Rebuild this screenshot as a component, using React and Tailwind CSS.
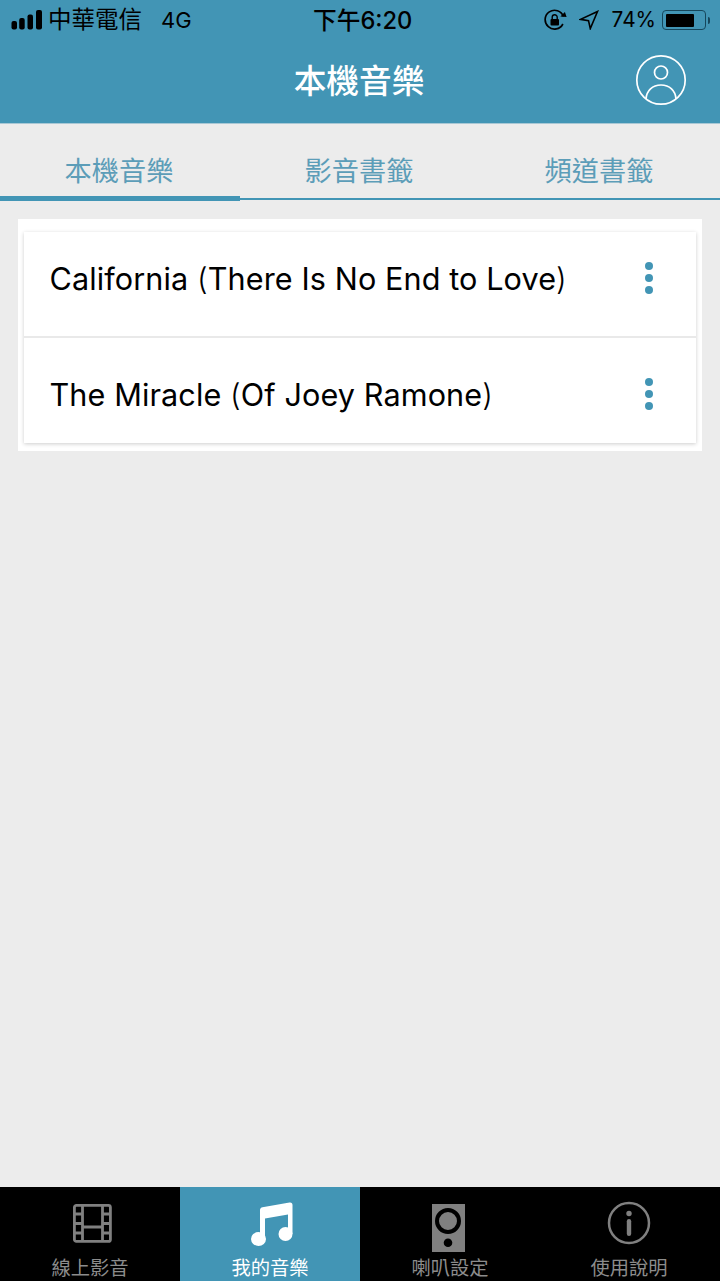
const CJK = "font-['Inter','Noto_Sans_CJK_TC',sans-serif]";

function Signal() {
  return (
    <svg width="32" height="20" viewBox="0 0 32 20" className="shrink-0">
      <rect x="0.500" y="11" width="5.500" height="8.500" rx="2" fill="#000" />
      <rect x="8.200" y="8" width="5.500" height="11.500" rx="2" fill="#000" />
      <rect x="16.500" y="4.500" width="5.500" height="15" rx="2" fill="#000" />
      <rect x="25" y="0" width="6" height="19.500" rx="2" fill="#000" />
    </svg>
  );
}

function RotationLock() {
  return (
    <svg width="23" height="22" viewBox="0 0 23 22" fill="none">
      <path d="M18.900 15A9.400 9.400 0 1 1 19.400 7.500" stroke="#000" strokeWidth="1.700" />
      <path d="M16.400 7.400l6.200.6-1.700-5z" fill="#000" />
      <rect x="6.500" y="10" width="8.500" height="6.500" rx="1" fill="#000" />
      <path d="M8.200 10.500V8.300a2.500 2.500 0 0 1 5 0v2.200" stroke="#000" strokeWidth="1.400" />
    </svg>
  );
}

function LocationArrow() {
  return (
    <svg width="20" height="20" viewBox="0 0 20 20" fill="none">
      <path d="M18.500 1.500 1.600 9.400l7.900 1.200 1.800 8z" stroke="#000" strokeWidth="1.600" strokeLinejoin="miter" />
    </svg>
  );
}

function Battery() {
  return (
    <div className="flex items-center">
      <div className="w-[44px] h-[20px] rounded-[4px] border border-[#16475c] p-[2.500px] pl-[3px] flex">
        <div className="w-[28px] h-full bg-black rounded-[1px]" />
      </div>
      <div className="w-[2px] h-[7px] ml-[1.500px] bg-[#16475c] rounded-r-[2px]" />
    </div>
  );
}

function StatusBar() {
  return (
    <div className={`relative h-[40px] flex items-center justify-between pl-[11px] pr-[10.500px] text-black ${CJK}`}>
      <div className="flex items-center">
        <Signal />
        <span className="ml-[5px] text-[23.500px] leading-none">中華電信</span>
        <span className="ml-[19px] text-[22px] leading-none">4G</span>
      </div>
      <div className="absolute left-[313px] top-[7px] text-[23.700px] font-medium leading-[27px] whitespace-nowrap">下午6:20</div>
      <div className="flex items-center">
        <RotationLock />
        <span className="ml-[12px] flex"><LocationArrow /></span>
        <span className="ml-[13px] text-[20.800px] leading-none">74%</span>
        <span className="ml-[6px] flex"><Battery /></span>
      </div>
    </div>
  );
}

function UserIcon() {
  return (
    <svg width="52" height="52" viewBox="0 0 52 52" fill="none" stroke="#fff" strokeWidth="1.700">
      <circle cx="26" cy="26" r="24.200" />
      <circle cx="26" cy="18.500" r="6.500" />
      <path d="M11 45C11.500 36.500 17.500 31 26 31S40.500 36.500 41 45" />
    </svg>
  );
}

function Header() {
  return (
    <div className="h-[124px] bg-[#4295b5] border-b border-[#a9c8d5]">
      <StatusBar />
      <div className="relative h-[83px] flex items-center justify-center pr-[2px]">
        <span className={`text-[32.700px] font-medium text-white leading-none ${CJK}`}>本機音樂</span>
        <div className="absolute right-[33px] top-[14px]"><UserIcon /></div>
      </div>
    </div>
  );
}

function Tabs() {
  const tabs = ["本機音樂", "影音書籤", "頻道書籤"];
  return (
    <div className="h-[78px] flex">
      {tabs.map((t, i) => (
        <div key={t} className="w-[240px] flex flex-col">
          <div className={`h-[72px] pt-[30px] pr-[2px] text-center text-[27.200px] leading-[36px] text-[#5c9db8] ${CJK}`}>{t}</div>
          {i === 0 ? (
            <div className="h-[5px] bg-[#4295b5]" />
          ) : (
            <div className="h-[2px] bg-[#4295b5] mt-[2px]" />
          )}
        </div>
      ))}
    </div>
  );
}

function Dots() {
  return (
    <div className="flex flex-col gap-[4px]">
      <div className="w-[8px] h-[8px] rounded-full bg-[#4295b5]" />
      <div className="w-[8px] h-[8px] rounded-full bg-[#4295b5]" />
      <div className="w-[8px] h-[8px] rounded-full bg-[#4295b5]" />
    </div>
  );
}

function Row({ name, paren, last }) {
  return (
    <div className={`flex justify-between pl-[25.500px] pr-[43px] ${last ? "h-[105px] pt-[15px]" : "h-[106px] border-b-2 border-[#e9e9e9] pt-[5px]"}`}>
      <div className={`text-[30.600px] tracking-[0.1px] leading-[83px] text-black whitespace-nowrap ${CJK}`}>
        {name} <span className="font-light">(</span>{paren}<span className="font-light">)</span>
      </div>
      <div className="pt-[25px]"><Dots /></div>
    </div>
  );
}

function List() {
  return (
    <div className="mx-[18px] mt-[17px] h-[232px] bg-white pt-[13px] px-[6px]">
      <div className="bg-white shadow-[0_1px_4px_rgba(0,0,0,0.2)]">
        <Row name="California" paren="There Is No End to Love" />
        <Row name="The Miracle" paren="Of Joey Ramone" last />
      </div>
    </div>
  );
}

const FilmIcon = () => (
  <svg width="39" height="39" viewBox="0 0 39 39" fill="none" stroke="#808080" strokeWidth="2.800">
    <rect x="1.400" y="1.400" width="36" height="36" rx="2" />
    <path d="M9.500 1.500v36M29.500 1.500v36M9.500 23h20M1.500 10H9.500M1.500 19.500H9.500M1.500 29H9.500M29.500 10h8M29.500 19.500h8M29.500 29h8" />
  </svg>
);

const NoteIcon = () => (
  <svg width="42" height="44" viewBox="0 0 42 44" fill="#fff">
    <path d="M9 8c0-1.500 1-2.500 2.500-2.800L38.500.5C40.500.2 41.500 1.300 41.500 3v29h-4.500V12.500L14 16.500V38H9z" />
    <ellipse cx="7.500" cy="37" rx="7.500" ry="7" />
    <ellipse cx="34.500" cy="32" rx="7" ry="7" />
  </svg>
);

const SpeakerIcon = () => (
  <svg width="33" height="48" viewBox="0 0 33 48">
    <rect width="33" height="48" fill="#808080" />
    <circle cx="16" cy="17" r="11" fill="#808080" stroke="#000" strokeWidth="4" />
    <circle cx="16" cy="38.700" r="4.300" fill="#000" />
  </svg>
);

const InfoIcon = () => (
  <svg width="44" height="44" viewBox="0 0 44 44" fill="none" stroke="#808080">
    <circle cx="22" cy="22" r="20" strokeWidth="2.500" />
    <circle cx="22" cy="12.500" r="2.700" fill="#808080" stroke="none" />
    <rect x="19.800" y="18" width="4.400" height="17" rx="2.200" fill="#808080" stroke="none" />
  </svg>
);

function NavItem({ label, icon, active, iconClass, widthClass }) {
  return (
    <div className={`h-full flex flex-col items-center ${widthClass} ${active ? "bg-[#4295b5] text-white" : "bg-black text-[#8c8c8c]"}`}>
      <div className={`flex justify-center items-start h-[68px] ${iconClass}`}>{icon}</div>
      <div className={`text-[19.300px] leading-[26px] whitespace-nowrap ${CJK}`}>{label}</div>
    </div>
  );
}

function BottomNav() {
  return (
    <div className="h-[94px] bg-black flex overflow-hidden">
      <NavItem label="線上影音" icon={<FilmIcon />} iconClass="pt-[17px] pl-[4px]" widthClass="w-[180px]" />
      <NavItem label="我的音樂" icon={<NoteIcon />} active iconClass="pt-[15px] pl-[3px]" widthClass="w-[180px]" />
      <NavItem label="喇叭設定" icon={<SpeakerIcon />} iconClass="pt-[17px] pr-[3px]" widthClass="w-[180px]" />
      <NavItem label="使用說明" icon={<InfoIcon />} iconClass="pt-[14px]" widthClass="w-[178px]" />
    </div>
  );
}

export default function App() {
  return (
    <div className="w-[720px] h-[1281px] flex flex-col bg-[#ececec] overflow-hidden">
      <Header />
      <Tabs />
      <List />
      <div className="flex-1" />
      <BottomNav />
    </div>
  );
}
